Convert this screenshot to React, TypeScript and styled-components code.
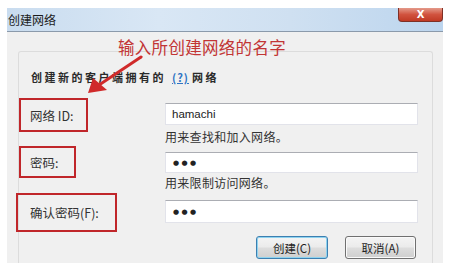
import styled, { createGlobalStyle } from "styled-components";

const GlobalStyle = createGlobalStyle`
  html, body {
    margin: 0;
    padding: 0;
    background: #ffffff;
  }
  body {
    font-family: "Noto Sans CJK SC", "Noto Sans", "Liberation Sans", sans-serif;
  }
`;

const Page = styled.div`
  width: 451px;
  height: 273px;
  padding: 8px 8px 0 7px;
  box-sizing: border-box;
  overflow: hidden;
`;

const Window = styled.div`
  position: relative;
  width: 436px;
  height: 255px;
  background: #f0f0f0;
  display: flex;
  flex-direction: column;
  overflow: hidden;
`;

// title bar

const TitleBar = styled.div`
  display: flex;
  justify-content: space-between;
  align-items: flex-start;
  height: 23px;
  background: linear-gradient(90deg, #c9dcef 0%, #d9e7f5 35%, #cfe0f1 65%, #bcd5ee 100%);
  border-bottom: 1px solid #8b9aab;
  flex-shrink: 0;
`;

const TitleText = styled.div`
  padding: 4px 0 0 1px;
  font-size: 12px;
  line-height: 16px;
  color: #1b1b1b;
`;

const CloseButton = styled.div`
  width: 45px;
  height: 14px;
  display: flex;
  align-items: center;
  justify-content: center;
  box-sizing: border-box;
  background: linear-gradient(180deg, #e49a8a 0%, #d1533f 50%, #c03a25 100%);
  border: 1px solid #7e3026;
  border-top: none;
  border-radius: 0 0 4px 4px;
  color: #ffffff;
  font-family: "DejaVu Sans", sans-serif;
  font-size: 10px;
  font-weight: bold;
  line-height: 10px;
`;

// body

const Body = styled.div`
  flex: 1;
  padding: 19px 10px 0 11px;
`;

const GroupBox = styled.div`
  height: 100%;
  box-sizing: border-box;
  border: 1px solid #dcdcdc;
  border-bottom: none;
  border-radius: 3px 3px 0 0;
  padding: 18px 16px 0 0;
`;

const GroupHeader = styled.div`
  margin-left: 12px;
  font-size: 11px;
  line-height: 14px;
  font-weight: bold;
  letter-spacing: 2.5px;
  color: #2a2a2a;
  white-space: nowrap;
`;

const HelpLink = styled.span`
  color: #2f74c4;
  text-decoration: underline;
  letter-spacing: 1px;
  margin: 0 3px 0 6px;
`;

const FieldRow = styled.div<{ $top: number }>`
  display: grid;
  grid-template-columns: 146px 253px;
  margin-top: ${(p) => p.$top}px;
  align-items: start;
`;

interface LabelBoxProps {
  $width: number;
  $height: number;
  $shift?: number;
}

const LabelBox = styled.div<LabelBoxProps>`
  width: ${(p) => p.$width}px;
  height: ${(p) => p.$height}px;
  margin-left: ${(p) => p.$shift ?? 0}px;
  box-sizing: border-box;
  border: 2px solid #c0262a;
  display: flex;
  align-items: center;
  padding-left: ${(p) => 9 - (p.$shift ?? 0)}px;
  font-size: 12.5px;
  color: #333333;
  white-space: nowrap;
`;

const InputCol = styled.div<{ $offset: number }>`
  display: flex;
  flex-direction: column;
  padding-top: ${(p) => p.$offset}px;
`;

const TextInput = styled.div<{ $height: number; $secret?: boolean }>`
  height: ${(p) => p.$height}px;
  box-sizing: border-box;
  background: #ffffff;
  border: 1px solid #e2e3ea;
  border-top-color: #abadb3;
  padding-left: ${(p) => (p.$secret ? 7 : 6)}px;
  display: flex;
  align-items: center;
  color: #222;
  font-family: ${(p) => (p.$secret ? '"DejaVu Sans", sans-serif' : '"Liberation Sans", sans-serif')};
  font-size: ${(p) => (p.$secret ? "7px" : "11.5px")};
  letter-spacing: ${(p) => (p.$secret ? "2.4px" : "0")};
`;

const Helper = styled.div<{ $gap: number }>`
  margin-top: ${(p) => p.$gap}px;
  font-size: 12px;
  line-height: 14px;
  color: #333333;
  letter-spacing: 0.3px;
  white-space: nowrap;
`;

const ButtonRow = styled.div`
  display: flex;
  justify-content: flex-end;
  gap: 17px;
  margin-top: 4px;
`;

const DialogButton = styled.div<{ $focused?: boolean }>`
  width: ${(p) => (p.$focused ? 72 : 71)}px;
  height: 23px;
  box-sizing: border-box;
  border: 1px solid ${(p) => (p.$focused ? "#3c7fb1" : "#707070")};
  box-shadow: ${(p) => (p.$focused ? "inset 0 0 0 1px #8fd3ef" : "inset 0 0 0 1px #fafafa")};
  border-radius: 3px;
  background: linear-gradient(180deg, #f4f4f4 0%, #ebebeb 48%, #dddddd 52%, #cfcfcf 100%);
  display: flex;
  align-items: center;
  justify-content: center;
  font-size: 11.5px;
  color: #1f1f1f;
`;

// annotations on top of the dialog

const Annotation = styled.div`
  position: absolute;
  left: 111px;
  top: 29px;
  font-size: 16.5px;
  line-height: 20px;
  color: #c23535;
  letter-spacing: 0.3px;
  white-space: nowrap;
`;

const ArrowSvg = styled.svg`
  position: absolute;
  left: 70px;
  top: 44px;
`;

export default function App() {
  return (
    <>
      <GlobalStyle />
      <Page>
        <Window>
          <TitleBar>
            <TitleText>创建网络</TitleText>
            <CloseButton>X</CloseButton>
          </TitleBar>
          <Body>
            <GroupBox>
              <GroupHeader>
                创建新的客户端拥有的<HelpLink>(?)</HelpLink>网络
              </GroupHeader>
              <FieldRow $top={14}>
                <LabelBox $width={69} $height={34}>
                  网络 ID:
                </LabelBox>
                <InputCol $offset={5}>
                  <TextInput $height={22}>hamachi</TextInput>
                  <Helper $gap={5}>用来查找和加入网络。</Helper>
                </InputCol>
              </FieldRow>
              <FieldRow $top={2}>
                <LabelBox $width={57} $height={32}>
                  密码:
                </LabelBox>
                <InputCol $offset={6}>
                  <TextInput $height={21} $secret>
                    ●●●
                  </TextInput>
                  <Helper $gap={3}>用来限制访问网络。</Helper>
                </InputCol>
              </FieldRow>
              <FieldRow $top={3}>
                <LabelBox $width={101} $height={39} $shift={-3}>
                  确认密码(F):
                </LabelBox>
                <InputCol $offset={7}>
                  <TextInput $height={23} $secret>
                    ●●●
                  </TextInput>
                </InputCol>
              </FieldRow>
              <ButtonRow>
                <DialogButton $focused>创建(C)</DialogButton>
                <DialogButton>取消(A)</DialogButton>
              </ButtonRow>
            </GroupBox>
          </Body>
          <Annotation>输入所创建网络的名字</Annotation>
          <ArrowSvg width="80" height="56" viewBox="0 0 80 56">
            <line x1="64" y1="5" x2="22" y2="33" stroke="#d02a2a" strokeWidth="3" strokeLinecap="round" />
            <polygon points="11,41 16,26 30,38" fill="#d02a2a" />
          </ArrowSvg>
        </Window>
      </Page>
    </>
  );
}
